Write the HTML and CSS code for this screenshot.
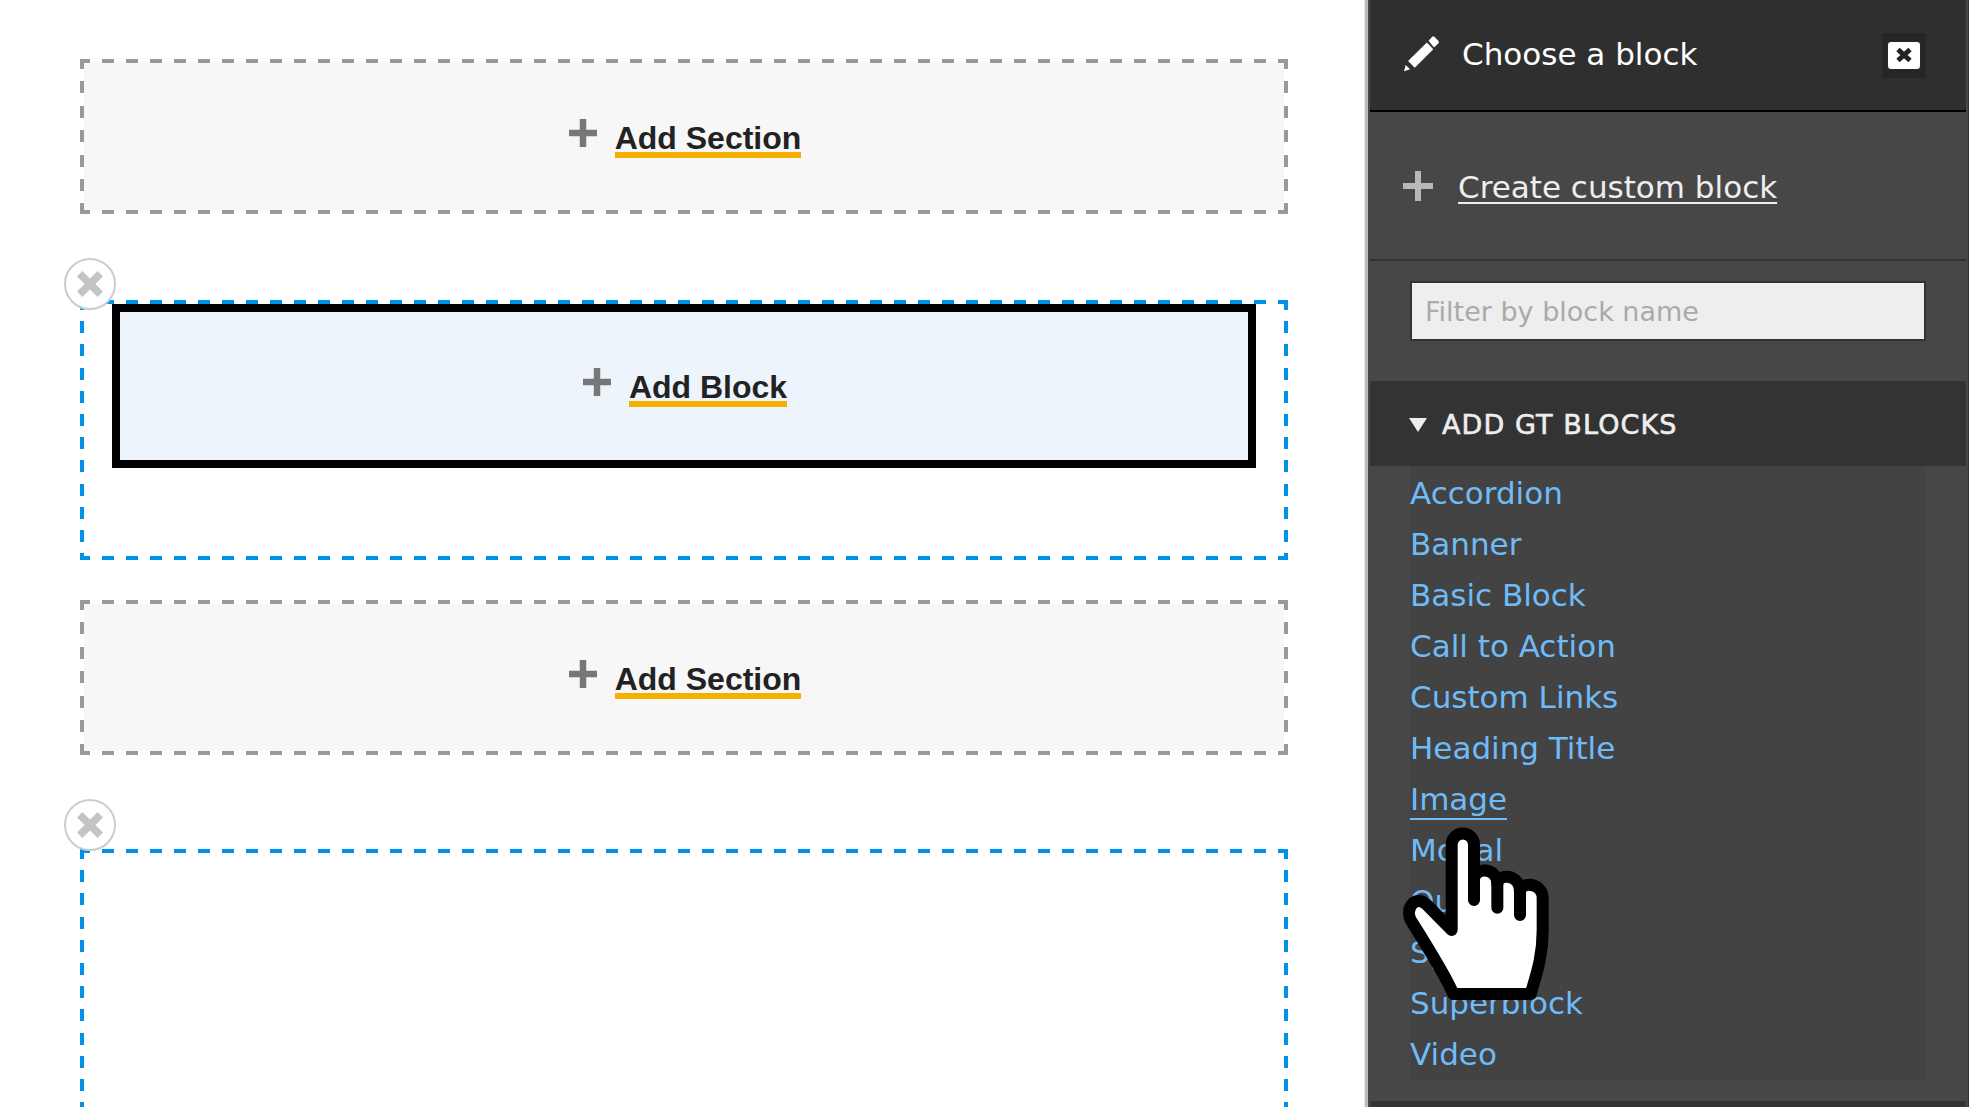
FILE: index.html
```html
<!DOCTYPE html>
<html lang="en">
<head>
    <meta charset="UTF-8">
    <meta name="viewport" content="width=device-width, initial-scale=1.0">
    <title>Choose a block</title>
    <link rel="stylesheet" href="styles.css">
</head>
<body>
    <div class="canvas">
        <div class="dashed add-section first">
            <div class="add-row">
                <svg class="plus" viewBox="0 0 30 30"><path d="M15 1v28M1 15h28"/></svg>
                <a class="add-link">Add Section</a>
            </div>
        </div>

        <div class="dashed layout-section tall">
            <button class="remove"><svg viewBox="0 0 24 24"><path d="M2.500 2.500l19 19M21.500 2.500l-19 19"/></svg></button>
            <div class="block-target">
                <div class="add-row">
                    <svg class="plus" viewBox="0 0 30 30"><path d="M15 1v28M1 15h28"/></svg>
                    <a class="add-link">Add Block</a>
                </div>
            </div>
        </div>

        <div class="dashed add-section middle">
            <div class="add-row">
                <svg class="plus" viewBox="0 0 30 30"><path d="M15 1v28M1 15h28"/></svg>
                <a class="add-link">Add Section</a>
            </div>
        </div>

        <div class="dashed layout-section open">
            <button class="remove"><svg viewBox="0 0 24 24"><path d="M2.500 2.500l19 19M21.500 2.500l-19 19"/></svg></button>
        </div>
    </div>

    <aside class="tray">
        <header class="tray-head">
            <svg class="pencil" viewBox="25 20 110 110">
                <path d="M40 97L96 42l19 20-55 55z"/>
                <path d="M28 128l5-19 13 13z"/>
                <path d="M101 37l10-11q4-4 8 0l11 11q4 4 0 8l-11 11q-1 1-3 0z"/>
            </svg>
            <h1 class="tray-title">Choose a block</h1>
            <button class="tray-close">
                <span class="close-face"><svg viewBox="0 0 18 18"><path d="M3 3.500l12 11M15 3.500L3 14.500"/></svg></span>
            </button>
        </header>

        <div class="create-row">
            <svg class="plus light" viewBox="0 0 30 30"><path d="M15 3v24M3 15h24"/></svg>
            <a class="create-link">Create custom block</a>
        </div>

        <div class="filter-row">
            <input class="filter" type="text" placeholder="Filter by block name">
        </div>

        <div class="group-head">
            <span class="caret"></span>
            <span class="group-name">ADD GT BLOCKS</span>
        </div>

        <ul class="block-list">
            <li><a>Accordion</a></li>
            <li><a>Banner</a></li>
            <li><a>Basic Block</a></li>
            <li><a>Call to Action</a></li>
            <li><a>Custom Links</a></li>
            <li><a>Heading Title</a></li>
            <li><a class="hovered">Image</a></li>
            <li><a>Modal</a></li>
            <li><a>Quote</a></li>
            <li><a>Spacer</a></li>
            <li><a>Superblock</a></li>
            <li><a>Video</a></li>
        </ul>

        <div class="tray-foot"></div>
    </aside>

    <!-- mouse pointer over the list -->
    <svg class="hand" viewBox="0 0 1200 1041">
        <path class="hand-shape" d="M335 510V254A33.5 33.5 0 0 1 402 254V360C402 320 472 320 472 372C472 340 540 340 540 395C540 365 608 365 608 415V510C608 590 590 640 572 702H340C318 650 275 580 212 480C195 445 225 405 258 432Z"/>
        <path class="hand-line" d="M402 340V420M472 360V443M540 385V465"/>
    </svg>
</body>
</html>
```

FILE: styles.css
```css
* {
    margin: 0;
    padding: 0;
    box-sizing: border-box;
}

html, body {
    height: 100%;
    background: #fff;
}

body {
    display: flex;
    overflow: hidden;
    font-family: "DejaVu Sans", sans-serif;
}

.canvas {
    width: 1365px;
    height: 1107px;
    flex: none;
    padding-left: 80px;
    border-right: 1px dotted #ccc;
    overflow: hidden;
}

/* chrome's own dashed border has the wrong rhythm, so the dashes are painted */
.dashed {
    --dash: #999;
    --fill: transparent;
    --step: 24.4px;
    position: relative;
    width: 1208px;
    background-image:
        repeating-linear-gradient(90deg, var(--dash) -2px 10px, transparent 10px 22px),
        repeating-linear-gradient(90deg, var(--dash) -2px 10px, transparent 10px 22px),
        repeating-linear-gradient(180deg, var(--dash) -2px 10px, transparent 10px calc(var(--step) - 2px)),
        repeating-linear-gradient(180deg, var(--dash) -2px 10px, transparent 10px calc(var(--step) - 2px)),
        linear-gradient(var(--fill), var(--fill));
    background-size: 100% 4px, 100% 4px, 4px 100%, 4px 100%, calc(100% - 8px) calc(100% - 8px);
    background-position: 0 0, 0 100%, 0 0, 100% 0, 4px 4px;
    background-repeat: no-repeat;
}

.add-section {
    --fill: #f7f7f7;
    height: 155px;
    display: flex;
    align-items: center;
    justify-content: center;
    padding-top: 3px;
}

.add-section.first {
    margin-top: 59px;
}

.add-section.middle {
    margin-top: 40px;
}

.layout-section {
    --dash: #0092e6;
    --step: 23.2px;
    padding: 4px 32px 0;
}

.layout-section.tall {
    height: 260px;
    margin-top: 86px;
}

.layout-section.open {
    height: 300px;
    margin-top: 94px;
}

.remove {
    position: absolute;
    left: -16px;
    top: -42px;
    width: 52px;
    height: 52px;
    border: 2px solid #ccc;
    border-radius: 50%;
    background: #fff;
    display: flex;
    align-items: center;
    justify-content: center;
}

.layout-section.open .remove {
    top: -50px;
}

.remove svg {
    width: 26px;
    height: 26px;
}

.remove path {
    fill: none;
    stroke: #c4c4c4;
    stroke-width: 7;
}

.block-target {
    height: 164px;
    border: 8px solid #000;
    background: #edf4fc;
    display: flex;
    align-items: center;
    justify-content: center;
    padding-top: 2px;
}

.add-row {
    display: flex;
    align-items: flex-start;
    gap: 17px;
    height: 40px;
    margin-left: 1px;
}

.plus {
    width: 30px;
    height: 30px;
    flex: none;
}

.plus path {
    fill: none;
    stroke: #777;
    stroke-width: 6.5;
}

.plus.light path {
    stroke: #b8b8b8;
    stroke-width: 6;
    stroke-linecap: square;
}

.add-link {
    margin-top: 6px;
    font-family: "Liberation Sans", Arial, sans-serif;
    font-size: 32px;
    font-weight: 700;
    line-height: 28px;
    color: #222;
    border-bottom: 6px solid #f8b000;
    cursor: pointer;
}

.tray {
    width: 604px;
    height: 1107px;
    flex: none;
    display: flex;
    flex-direction: column;
    background: #474747;
    border-left: 3px solid #bbb;
    border-right: 1px solid #333;
    padding: 0 2px;
    color: #eee;
}

.tray-head {
    height: 112px;
    flex: none;
    display: flex;
    align-items: center;
    background: #2f2f2f;
    border-bottom: 2px solid #000;
    padding-left: 33px;
}

.pencil {
    width: 37px;
    height: 37px;
    margin-top: -4px;
    fill: #fff;
}

.tray-title {
    margin-left: 22px;
    margin-top: -3px;
    font-size: 31px;
    font-weight: 400;
    color: #fff;
}

.tray-close {
    margin-left: auto;
    margin-right: 40px;
    width: 44px;
    height: 45px;
    border: 0;
    background: #262626;
    display: flex;
    align-items: center;
    justify-content: center;
}

.close-face {
    width: 32px;
    height: 27px;
    border-radius: 3px;
    background: #fff;
    display: flex;
    align-items: center;
    justify-content: center;
}

.close-face svg {
    width: 18px;
    height: 18px;
}

.close-face path {
    fill: none;
    stroke: #222;
    stroke-width: 5;
}

.create-row {
    height: 149px;
    flex: none;
    display: flex;
    align-items: center;
    gap: 25px;
    padding-left: 33px;
    border-bottom: 2px solid #333;
}

.create-link {
    margin-top: 2px;
    font-size: 31px;
    color: #eee;
    text-decoration: underline;
    text-underline-offset: 4px;
    text-decoration-thickness: 2px;
    cursor: pointer;
}

.filter-row {
    height: 120px;
    flex: none;
    padding: 20px 0 0 40px;
}

.filter {
    display: block;
    width: 516px;
    height: 60px;
    padding: 0 13px;
    border: 2px solid #333;
    background: #eee;
    font-family: inherit;
    font-size: 27px;
    color: #333;
}

.filter::placeholder {
    color: #aaa;
    opacity: 1;
}

.group-head {
    height: 85px;
    flex: none;
    display: flex;
    align-items: center;
    gap: 15px;
    padding: 2px 0 0 39px;
    background: #333;
}

.caret {
    width: 0;
    height: 0;
    border-left: 9px solid transparent;
    border-right: 9px solid transparent;
    border-top: 14px solid #eee;
}

.group-name {
    font-size: 27px;
    font-weight: 400;
    letter-spacing: 1.1px;
    -webkit-text-stroke: 0.6px #eee;
}

.block-list {
    list-style: none;
    width: 515px;
    height: 614px;
    flex: none;
    margin-left: 40px;
    padding-top: 2px;
    background: #434343;
}

.block-list li {
    height: 51px;
    line-height: 51px;
    font-size: 31px;
    color: #6fbbf8;
}

.block-list a {
    display: inline-block;
    line-height: 38px;
    cursor: pointer;
}

.block-list a.hovered {
    border-bottom: 2px solid #6fbbf8;
}

.tray-foot {
    margin-top: auto;
    height: 6px;
    background: #333;
}

.hand {
    position: absolute;
    left: 1340px;
    top: 760px;
    width: 400px;
    height: 347px;
}

.hand-shape {
    fill: #fff;
    stroke: #000;
    stroke-width: 36;
    stroke-linejoin: round;
}

.hand-line {
    fill: none;
    stroke: #000;
    stroke-width: 36;
    stroke-linecap: round;
}
```
